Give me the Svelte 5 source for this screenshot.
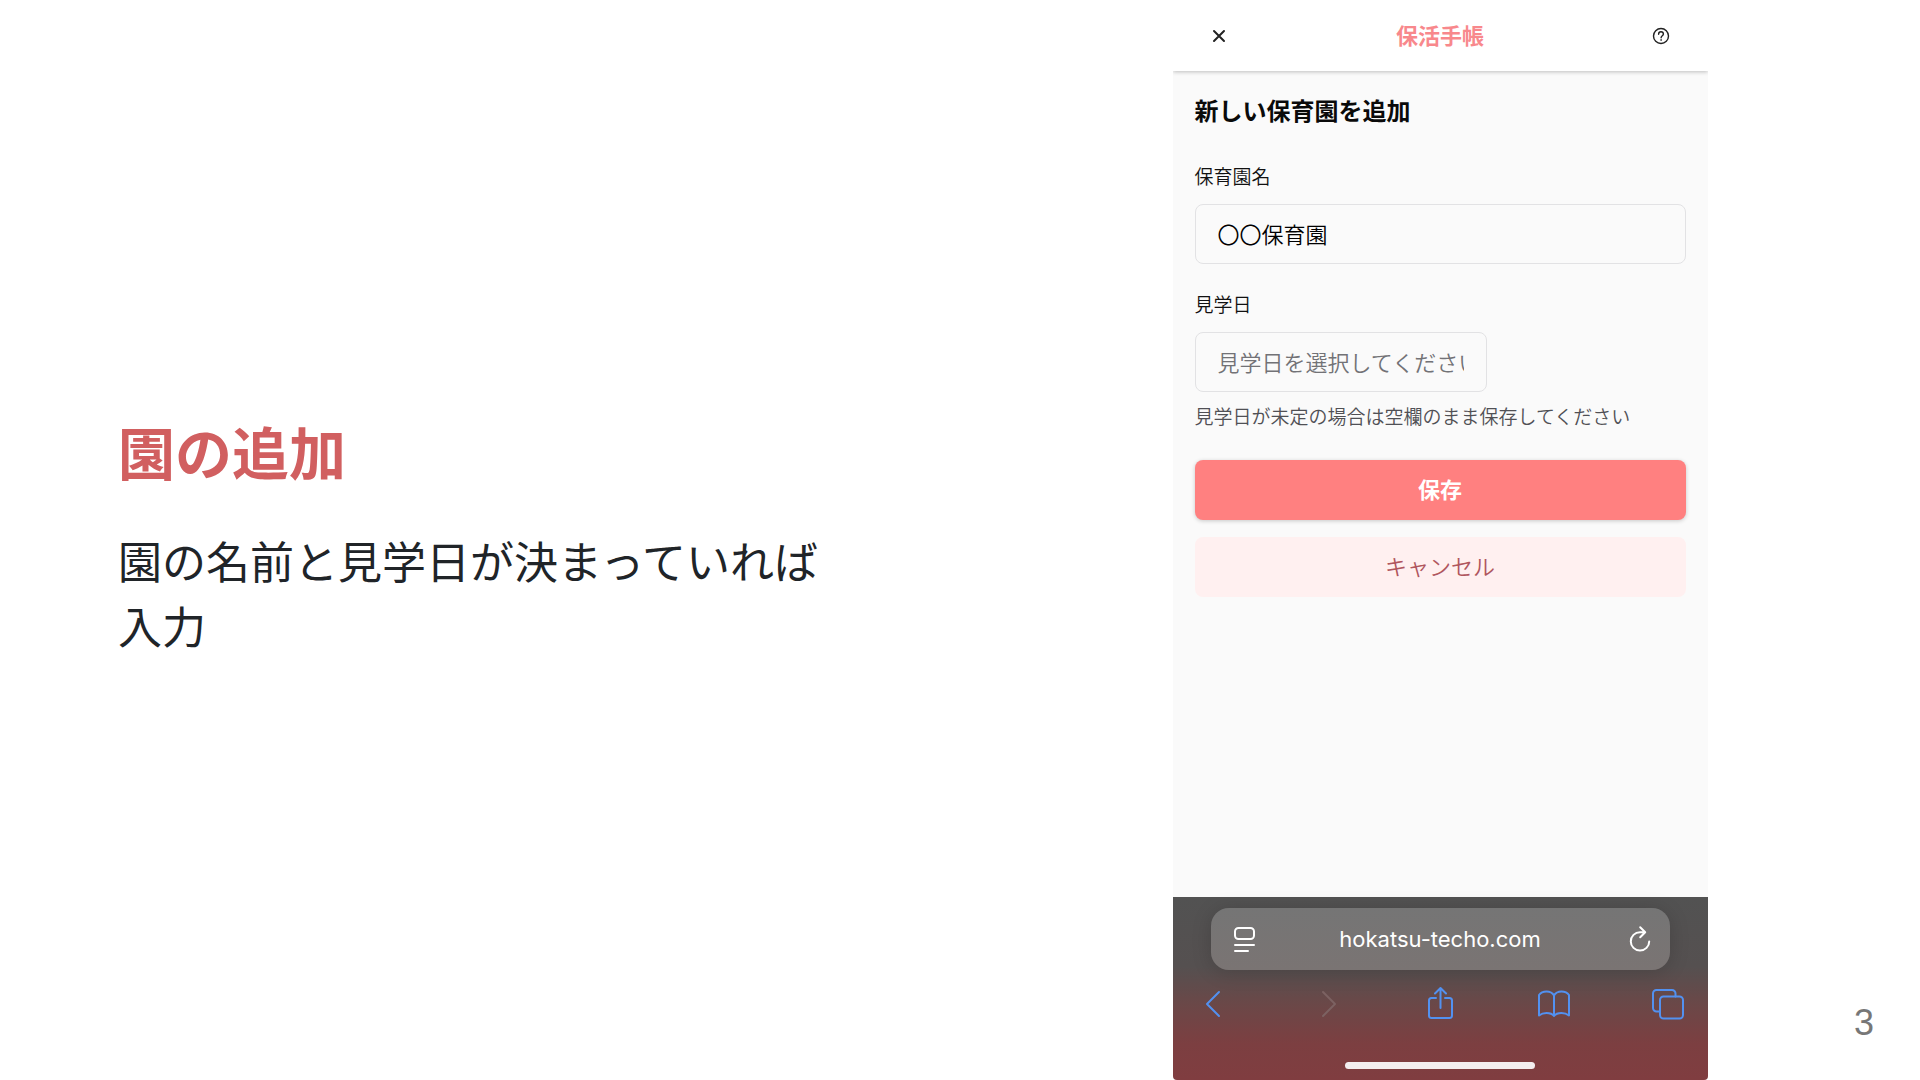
<script>
  let nurseryName = $state('〇〇保育園');
  let visitDate = $state('');
</script>

<main class="slide">
  <section class="copy">
    <h1>園の追加</h1>
    <p>園の名前と見学日が決まっていれば入力</p>
  </section>

  <section class="stage">
    <div class="phone">
      <header class="app-header">
        <button class="icon-button" type="button" aria-label="閉じる">
          <svg width="36" height="36" viewBox="0 0 36 36"><path d="M13 13l10 10M23 13L13 23" /></svg>
        </button>
        <span class="brand">保活手帳</span>
        <button class="icon-button" type="button" aria-label="ヘルプ">
          <svg class="help" width="36" height="36" viewBox="0 0 36 36">
            <circle cx="18" cy="18" r="7.5" />
            <path d="M15.6 16.2c0-1.4 1-2.4 2.4-2.4s2.4.9 2.4 2.2c0 1.7-2.3 1.8-2.3 3.7M18.1 21.6v.6" />
          </svg>
        </button>
      </header>

      <form class="form" onsubmit={(event) => event.preventDefault()}>
        <h2>新しい保育園を追加</h2>
        <div class="field">
          <label for="name">保育園名</label>
          <input id="name" type="text" bind:value={nurseryName} />
        </div>
        <div class="field">
          <label for="date">見学日</label>
          <input
            id="date"
            class="short"
            type="text"
            placeholder="見学日を選択してください"
            aria-describedby="date-hint"
            bind:value={visitDate}
          />
          <small id="date-hint">見学日が未定の場合は空欄のまま保存してください</small>
        </div>
        <div class="actions">
          <button class="save" type="submit">保存</button>
          <button class="cancel" type="button">キャンセル</button>
        </div>
      </form>

      <footer class="browser">
        <div class="address">
          <button type="button" aria-label="ページ設定">
            <svg width="28" height="28" viewBox="0 0 28 28">
              <rect x="5" y="3" width="19" height="11" rx="3.5" />
              <path d="M5 20h19M5 26h13" />
            </svg>
          </button>
          <a href="#top">hokatsu-techo.com</a>
          <button type="button" aria-label="再読み込み">
            <svg width="28" height="28" viewBox="0 0 28 28">
              <path d="M21.7 7.2h-4.7a9.2 9.2 0 1 0 9.2 9.2M17.2 2.2l5 5-5 5" />
            </svg>
          </button>
        </div>
        <nav class="tools" aria-label="ブラウザ">
          <button type="button" aria-label="戻る">
            <svg width="36" height="36" viewBox="0 0 36 36"><path d="M24 6L12 18l12 12" /></svg>
          </button>
          <button type="button" aria-label="進む" disabled>
            <svg width="36" height="36" viewBox="0 0 36 36"><path d="M15 6l12 12-12 12" /></svg>
          </button>
          <button type="button" aria-label="共有">
            <svg width="36" height="36" viewBox="0 0 36 36">
              <path d="M14 12H9.5A2.5 2.5 0 0 0 7 14.5v15A2.5 2.5 0 0 0 9.5 32h18a2.5 2.5 0 0 0 2.5-2.5v-15a2.5 2.5 0 0 0-2.5-2.5H23M18.5 22V2M13 7.5L18.5 2l5.500 5.500" />
            </svg>
          </button>
          <button type="button" aria-label="ブックマーク">
            <svg width="36" height="36" viewBox="0 0 36 36">
              <path d="M18 9.500v20.500M18 9.500C16.500 6.800 13.500 5.500 10.500 5.500S4.500 6.800 3 9v20.500c2-1.600 4.500-2.500 7.500-2.500s6 1 7.500 3c1.500-2 4.500-3 7.500-3s5.500.9 7.500 2.500V9c-1.500-2.200-4.500-3.500-7.500-3.500S19.500 6.800 18 9.500z" />
            </svg>
          </button>
          <button type="button" aria-label="タブ一覧">
            <svg width="36" height="36" viewBox="0 0 36 36">
              <rect x="10" y="10.500" width="23" height="22" rx="3.500" />
              <path d="M10 25.500H6.500A3.500 3.500 0 0 1 3 22V7.500A3.500 3.500 0 0 1 6.500 4H22a3.500 3.500 0 0 1 3.500 3.500v3" />
            </svg>
          </button>
        </nav>
        <div class="home-bar"></div>
      </footer>
    </div>
  </section>

  <span class="page-number">3</span>
</main>

<style>
  :global(body) {
    margin: 0;
    background: #fff;
  }

  .slide {
    position: relative;
    display: grid;
    grid-template-columns: 1fr 1fr;
    min-height: 100vh;
    font-family: 'Noto Sans CJK JP', sans-serif;
    color: #202428;
  }

  h1, h2, p {
    margin: 0;
  }

  .copy {
    display: flex;
    flex-direction: column;
    justify-content: center;
    gap: 43px;
    padding: 0 118px 8px;
  }

  h1 {
    font-size: 57px;
    line-height: 70px;
    font-weight: 700;
    color: #d15f60;
  }

  p {
    font-size: 44px;
    line-height: 65px;
  }

  .stage {
    display: flex;
    justify-content: center;
  }

  .phone {
    box-sizing: border-box;
    display: flex;
    flex-direction: column;
    width: 535px;
    max-width: 100%;
    border-radius: 0 0 4px 4px;
    overflow: hidden;
    background: #fafafa;
  }

  button {
    padding: 0;
    border: 0;
    background: none;
    font: inherit;
    color: inherit;
  }

  svg {
    display: block;
    fill: none;
    stroke: currentColor;
    stroke-width: 2;
    stroke-linecap: round;
    stroke-linejoin: round;
  }

  .help {
    stroke-width: 1.4;
  }

  .app-header {
    display: flex;
    align-items: center;
    justify-content: space-between;
    height: 71px;
    padding: 0 28px;
    background: #fff;
    box-shadow: 0 1px 4px rgba(0, 0, 0, 0.24);
    color: #222;
  }

  .brand {
    padding-bottom: 4px;
    font-size: 22px;
    font-weight: 700;
    color: #f8888c;
  }

  .form {
    flex: 1;
    display: flex;
    flex-direction: column;
    padding: 21px 22px;
    color: #111;
  }

  h2 {
    margin-bottom: 34px;
    font-size: 24px;
    line-height: 36px;
    font-weight: 700;
    color: #0a0a0a;
  }

  .field {
    display: flex;
    flex-direction: column;
    align-items: flex-start;
    margin-bottom: 26px;
    font-size: 19px;
    line-height: 28px;
  }

  input {
    box-sizing: border-box;
    width: 100%;
    height: 60px;
    margin-top: 14px;
    padding: 0 22px 2px;
    border: 1px solid #e2e2e4;
    border-radius: 8px;
    background: #fafafa;
    font: inherit;
    font-size: 22px;
    color: #000;
  }

  .short {
    width: 292px;
  }

  input::placeholder {
    color: #727276;
    opacity: 1;
  }

  small {
    margin-top: 10px;
    font-size: 19px;
    color: #505055;
  }

  label, input, small, .cancel {
    font-weight: 350;
  }

  .actions {
    display: grid;
    gap: 17px;
    margin-top: 4px;
    font-size: 22px;
  }

  .save, .cancel {
    height: 60px;
    padding-bottom: 4px;
    border-radius: 8px;
  }

  .save {
    background: #ff8080;
    box-shadow: 0 1px 4px rgba(0, 0, 0, 0.2);
    font-weight: 700;
    color: #fff;
  }

  .cancel {
    background: #fff0f0;
    color: #b0565e;
  }

  .browser {
    display: flex;
    flex-direction: column;
    align-items: center;
    padding: 11px 22px;
    background: linear-gradient(#525252, #555050 38%, #6a4848 58%, #7c3f41 80%, #803d40);
  }

  .address {
    box-sizing: border-box;
    display: flex;
    align-items: center;
    justify-content: space-between;
    align-self: stretch;
    height: 62px;
    margin: 0 16px;
    padding: 0 19px;
    border-radius: 18px;
    background: linear-gradient(#757575, #7a7473);
    box-shadow: 0 2px 20px rgba(0, 0, 0, 0.16);
    color: #fff;
  }

  .address a {
    font-family: Inter, sans-serif;
    font-size: 22px;
    color: inherit;
    text-decoration: none;
  }

  .tools {
    display: flex;
    justify-content: space-between;
    align-self: stretch;
    margin: 16px 0 40px;
    color: #5291f0;
  }

  .tools button:disabled {
    color: #7c6262;
  }

  .home-bar {
    width: 190px;
    height: 7px;
    border-radius: 4px;
    background: #f3eeef;
  }

  .page-number {
    position: absolute;
    right: 46px;
    bottom: 35px;
    font-family: 'Liberation Sans', sans-serif;
    font-size: 36px;
    line-height: 44px;
    color: #777;
  }
</style>
